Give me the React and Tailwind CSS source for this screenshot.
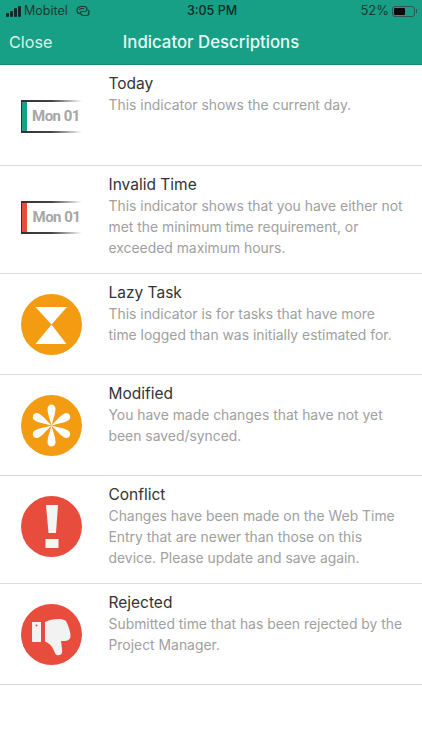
const font = { fontFamily: "Inter, 'Liberation Sans', sans-serif" };

function Chip({ color, shift }) {
  return (
    <div className="w-[61px] h-[33px] mt-[15px] flex flex-col">
      <div className="h-[2px] w-full bg-gradient-to-r from-[#333333] via-[#444444] to-transparent" />
      <div className="flex flex-1">
        <div className={`w-[6px] border-l border-[#333333] ${color}`} />
        <div className={`flex-1 flex items-center justify-center text-[#a6a6a6] font-bold text-[15px] tracking-[-0.5px] whitespace-nowrap ${shift}`} style={{ fontFamily: "Roboto, sans-serif" }}>Mon 01</div>
      </div>
      <div className="h-[2px] w-full bg-gradient-to-r from-[#333333] via-[#444444] to-transparent" />
    </div>
  );
}

const Hourglass = () => (
  <svg width="61" height="61" viewBox="0 0 61 61">
    <circle cx="30.5" cy="30.5" r="30.5" fill="#f39c12" />
    <path d="M14.5 13 H46 L30.5 30.5 L45.5 50 H14.5 L30.5 30.5 Z" fill="#fff" />
  </svg>
);

const Asterisk = () => (
  <svg width="61" height="61" viewBox="0 0 61 61">
    <circle cx="30.5" cy="30.5" r="30.5" fill="#f39c12" />
    {[0, 60, 120, 180, 240, 300].map((a) => (
      <path key={a} transform={`rotate(${a} 30.5 30.5)`} d="M30.5 30.5 C29 24 26.5 19 26.5 14 C26.5 11 28.5 9.5 30.5 9.5 C32.5 9.5 34.5 11 34.5 14 C34.5 19 32 24 30.5 30.5 Z" fill="#fff" />
    ))}
  </svg>
);

const Exclaim = () => (
  <svg width="61" height="61" viewBox="0 0 61 61">
    <circle cx="30.5" cy="30.5" r="30.5" fill="#e74c3c" />
    <path d="M25 9 H37 L35 37 H27.5 Z" fill="#f5f5f5" />
    <rect x="24.5" y="43" width="13" height="9" fill="#f5f5f5" />
  </svg>
);

const Thumb = () => (
  <svg width="61" height="61" viewBox="0 0 61 61">
    <circle cx="30.5" cy="30.5" r="30.5" fill="#e74c3c" />
    <rect x="11" y="18" width="9" height="20" fill="#f2f2f2" />
    <circle cx="15.5" cy="21.5" r="1" fill="#e74c3c" />
    <path d="M24 18 C28 16 32 15 38 15 C42 15 45 16 46 19 C48 24 49.5 28 49.5 32 C49.5 36 46 37 43 37 L40 37 C40.5 42 41.5 46 41 49 C40 51.5 36 52 34.5 50 C33 47 32 44 29.5 41 C27.5 39 25.5 38 24 37.5 Z" fill="#f2f2f2" />
  </svg>
);

const rows = [
  { icon: <Chip color="bg-[#16a085]" shift="pl-[3px]" />, title: "Today", lines: ["This indicator shows the current day."] },
  { icon: <Chip color="bg-[#e74c3c]" shift="pl-[4px]" />, title: "Invalid Time", lines: ["This indicator shows that you have either not", "met the minimum time requirement, or", "exceeded maximum hours."] },
  { icon: <Hourglass />, title: "Lazy Task", lines: ["This indicator is for tasks that have more", "time logged than was initially estimated for."] },
  { icon: <Asterisk />, title: "Modified", lines: ["You have made changes that have not yet", "been saved/synced."] },
  { icon: <Exclaim />, title: "Conflict", lines: ["Changes have been made on the Web Time", "Entry that are newer than those on this", "device. Please update and save again."] },
  { icon: <Thumb />, title: "Rejected", lines: ["Submitted time that has been rejected by the", "Project Manager."] },
];

export default function App() {
  return (
    <div className="w-[422px] h-[750px] bg-white overflow-hidden" style={font}>
      <header className="h-[65px] bg-[#17a085] border-b border-[#128a72] flex flex-col">
        <div className="h-[22px] flex items-center justify-between pl-[6px] pr-[5px] text-[13px] text-[#1c3b34]">
          <div className="flex items-center w-[140px]">
            <div className="flex items-end gap-[1px] h-[11px] mr-[3px]">
              <span className="w-[3px] h-[4px] rounded-[1px] bg-[#102a25]" />
              <span className="w-[3px] h-[6px] rounded-[1px] bg-[#102a25]" />
              <span className="w-[3px] h-[9px] rounded-[1px] bg-[#102a25]" />
              <span className="w-[3px] h-[11px] rounded-[1px] bg-[#102a25]" />
            </div>
            <span className="text-[12.5px]">Mobitel</span>
            <svg className="ml-[8px]" width="14" height="12" viewBox="0 0 14 12" fill="none" stroke="#1c3b34" strokeWidth="1.2">
              <path d="M5 8.5 H3.5 C1.5 8.5 1 7 1 5.5 C1 3 3 1.5 5.5 1.5 H8 C10 1.5 11 3 11 4.5 C11 5.5 10 6.5 8.5 6.5 H6" />
              <path d="M3.5 5 C3.5 4 4.5 3.5 5.5 3.5 H8 M6 6.5 C4.5 6.5 4 7.5 4.5 8.5 C5 10 6.5 10.5 8 10.5 H10.5 C12 10.5 13 9 13 7.5 C13 6.5 12.5 5.5 12 5" />
            </svg>
          </div>
          <span className="font-medium text-[12.5px] text-[#102a25] ml-[1px]">3:05 PM</span>
          <div className="flex items-center w-[140px] justify-end">
            <span>52%</span>
            <div className="ml-[3px] w-[23px] h-[11px] rounded-[3px] border border-[#2c5a50] p-[1px]">
              <div className="w-[11px] h-full rounded-[1px] bg-[#0a0a0a]" />
            </div>
            <div className="w-[1px] h-[4px] bg-[#2c5a50] ml-[1px]" />
          </div>
        </div>
        <div className="flex-1 relative flex items-center justify-center pb-[1px]">
          <span className="absolute left-[9px] text-[16.2px] text-[#d9f2ec]">Close</span>
          <span className="text-[16.8px] font-medium text-[#e9f8f4]">Indicator Descriptions</span>
        </div>
      </header>
      <main>
        {rows.map((r) => (
          <div key={r.title} className="flex border-b border-[#dcdcdc]">
            <div className="w-[61px] h-[100px] ml-[21px] mr-[26.5px] pt-[20px] shrink-0">{r.icon}</div>
            <div className={`flex-1 ${r.lines.length === 3 ? "pb-[14px]" : ""}`}>
              <div className="pt-[8px] text-[15.5px] leading-[22px] text-[#333333]">{r.title}</div>
              <div className="text-[13.9px] leading-[21px] text-[#a0a0a0] whitespace-nowrap">
                {r.lines.map((l) => <div key={l}>{l}</div>)}
              </div>
            </div>
          </div>
        ))}
      </main>
    </div>
  );
}
